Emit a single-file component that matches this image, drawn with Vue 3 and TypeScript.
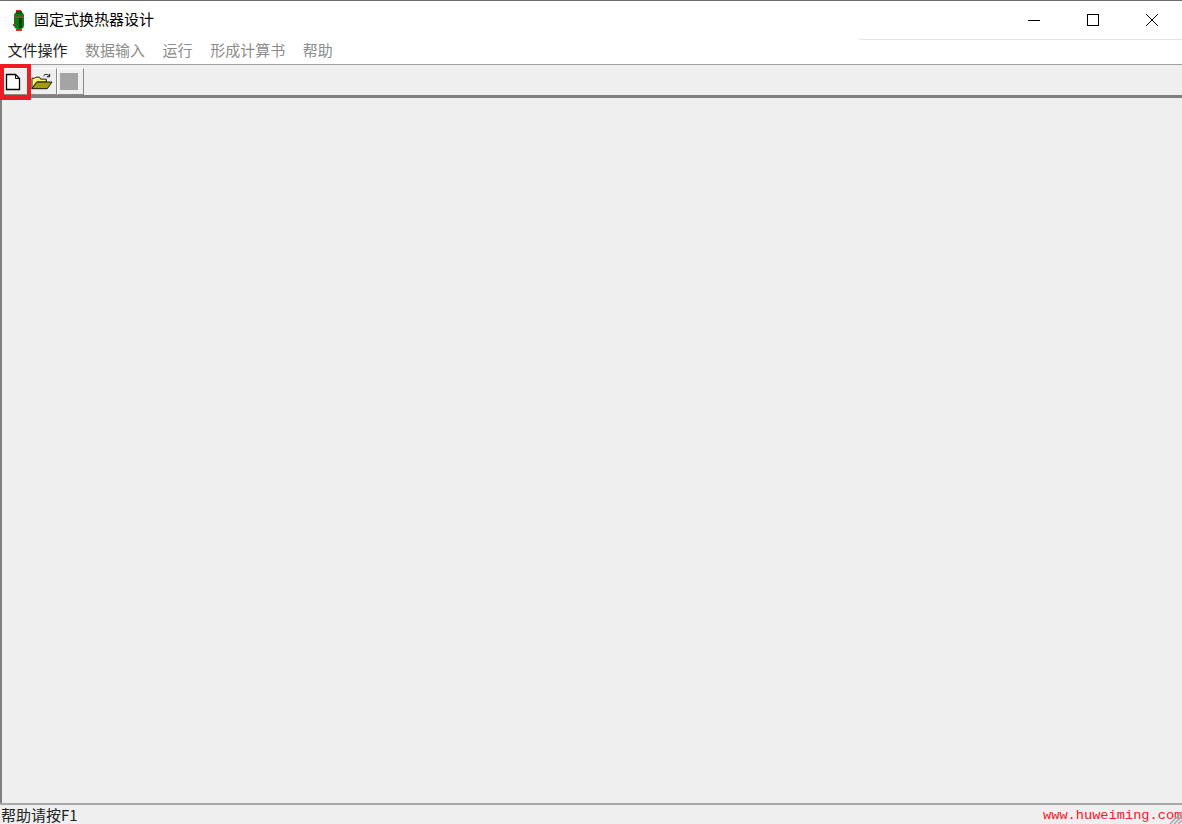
<script setup lang="ts">
const menus = [
  { label: '文件操作', active: true },
  { label: '数据输入', active: false },
  { label: '运行', active: false },
  { label: '形成计算书', active: false },
  { label: '帮助', active: false }
]
</script>

<template>
  <div class="window">
    <header class="titlebar">
      <svg class="app-icon" width="14" height="21" viewBox="0 0 14 21">
        <rect x="2" y="2" width="10" height="17" rx="4" fill="#0a7a14" />
        <rect x="4" y="1" width="6" height="3" fill="#0a5a10" />
        <rect x="4" y="0" width="5" height="1" fill="#e8261c" />
        <rect x="2" y="6.5" width="10" height="1.5" fill="#c8342a" />
        <rect x="7" y="8" width="3" height="10" fill="#0c3d0c" />
        <rect x="1" y="14" width="2" height="1" fill="#e8261c" />
        <rect x="1" y="15" width="1" height="1" fill="#e8261c" />
        <rect x="4" y="19" width="6" height="2" fill="#e8261c" />
      </svg>
      <span class="title">固定式换热器设计</span>
      <div class="controls">
        <button class="ctl">
          <svg width="12" height="12" viewBox="0 0 12 12"><path d="M0 6.5H12" stroke="#000" fill="none" /></svg>
        </button>
        <button class="ctl">
          <svg width="12" height="12" viewBox="0 0 12 12"><rect x="0.5" y="0.5" width="11" height="11" stroke="#000" fill="none" /></svg>
        </button>
        <button class="ctl">
          <svg width="12" height="12" viewBox="0 0 12 12"><path d="M0 0L12 12M12 0L0 12" stroke="#000" fill="none" /></svg>
        </button>
      </div>
    </header>

    <nav class="menubar">
      <span v-for="m in menus" :key="m.label" class="menu" :class="{ active: m.active }">{{ m.label }}</span>
      <i class="menu-line"></i>
    </nav>

    <div class="toolbar">
      <button class="tool tool-new">
        <svg width="16" height="18" viewBox="0 0 16 18">
          <path d="M1.5 1.5H10.5L14.5 5.5V16.5H1.5Z" fill="#fff" stroke="#000" stroke-width="1.3" />
          <path d="M10.5 1.5V5.5H14.5" fill="none" stroke="#000" />
        </svg>
      </button>
      <button class="tool">
        <svg width="23" height="18" viewBox="0 0 23 18">
          <path d="M13 3C14 0.5 17 0.5 19 2.5" fill="none" stroke="#000" />
          <path d="M19.5 0.5V3.5H16.5" fill="none" stroke="#000" />
          <path d="M1 16V5H4L5 4H9L10 6H16V9H6L1 16Z" fill="#fbf27a" stroke="#111" />
          <path d="M1 16L6 9H22L17 16Z" fill="#a39a0c" stroke="#111" />
        </svg>
      </button>
      <button class="tool">
        <span class="stop"></span>
      </button>
      <i class="highlight"></i>
    </div>

    <main class="workspace"></main>

    <footer class="statusbar">
      <span class="status-text">帮助请按F1</span>
      <span class="watermark">www.huweiming.com</span>
      <svg class="grip" width="16" height="14" viewBox="0 0 16 14">
        <path d="M16 2L4 14M16 6L8 14M16 10L12 14" stroke="#a8a8a8" stroke-width="1.5" fill="none" />
      </svg>
    </footer>
  </div>
</template>

<style scoped>
.window {
  width: 1182px;
  height: 824px;
  display: flex;
  flex-direction: column;
  background: #fff;
  overflow: hidden;
  font-family: "Noto Sans CJK SC", "Liberation Sans", sans-serif;
  border-top: 1px solid #6f6f6f;
  box-sizing: border-box;
}

.titlebar {
  height: 38px;
  flex: none;
  display: flex;
  align-items: center;
  padding-left: 12px;
  background: #fff;
}

.app-icon {
  flex: none;
}

.title {
  margin-left: 8px;
  margin-bottom: 3px;
  font-size: 15px;
  line-height: 20px;
  color: #000;
}

.controls {
  margin-left: auto;
  margin-right: 1px;
  display: flex;
}

.ctl {
  width: 59px;
  height: 38px;
  padding: 0;
  border: 0;
  background: transparent;
  display: flex;
  align-items: center;
  justify-content: center;
}

.menubar {
  position: relative;
  height: 25px;
  flex: none;
  display: flex;
  align-items: center;
  gap: 17.6px;
  padding: 0 0 3px 7.4px;
  box-sizing: border-box;
  background: #fff;
}

.menu {
  font-size: 15px;
  line-height: 20px;
  color: #8c8c8c;
}

.menu.active {
  color: #222;
}

.menu-line {
  position: absolute;
  top: 0;
  left: 859px;
  right: 0;
  height: 1px;
  background: #e4e4e4;
}

.toolbar {
  position: relative;
  height: 34px;
  flex: none;
  display: flex;
  align-items: flex-start;
  box-sizing: border-box;
  padding: 3px 0 0 30px;
  background: #efefef;
  border-top: 1px solid #a0a0a0;
  border-bottom: 3px solid #808080;
}

.tool {
  width: 27px;
  height: 27px;
  padding: 0 3px 0 0;
  display: flex;
  align-items: center;
  justify-content: center;
  background: #efefef;
  border: 1px solid;
  border-color: #fff #8a8a8a #8a8a8a #fff;
}

.tool-new {
  position: absolute;
  left: 1px;
  top: 3px;
  width: 28px;
  padding: 0 5px 0 0;
}

.highlight {
  position: absolute;
  left: 0;
  top: -1px;
  width: 31px;
  height: 36px;
  box-sizing: border-box;
  border: 4px solid #ec1c24;
  border-bottom-width: 5px;
}

.stop {
  width: 18px;
  height: 17px;
  background: #a4a4a4;
}

.workspace {
  flex: 1;
  background: #efefef;
  border-left: 2px solid #808080;
}

.statusbar {
  position: relative;
  height: 21px;
  flex: none;
  display: flex;
  align-items: center;
  background: #efefef;
  border-top: 2px solid #a8a8a8;
  box-sizing: border-box;
  padding-left: 1px;
}

.status-text {
  font-size: 15px;
  line-height: 19px;
  color: #222;
}

.watermark {
  position: absolute;
  left: 1043px;
  top: 3px;
  font-family: "Liberation Mono", monospace;
  font-size: 13.67px;
  line-height: 16px;
  color: #f0202c;
  white-space: nowrap;
}

.grip {
  position: absolute;
  right: 0;
  bottom: 0;
}
</style>

<style>
html,
body {
  margin: 0;
  background: #fff;
}
</style>
